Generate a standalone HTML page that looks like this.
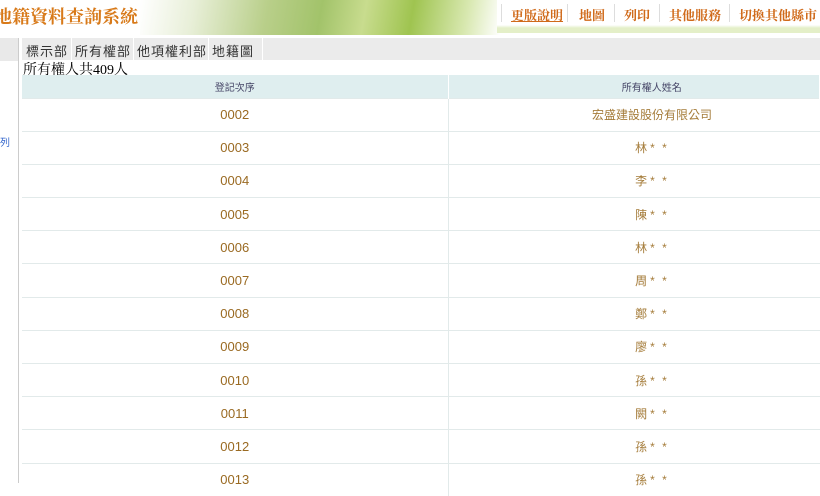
<!DOCTYPE html>
<html><head><meta charset="utf-8"><style>
*{margin:0;padding:0;box-sizing:border-box}
body{width:820px;height:483px;overflow:hidden;background:#fff;font-family:"Liberation Sans","Noto Sans CJK TC",sans-serif;position:relative}
#hdr{position:absolute;left:0;top:0;width:820px;height:35px;background:#fff}
#img{position:absolute;left:140px;top:0;width:360px;height:35px;background:linear-gradient(100deg,#fff 0%,#e8efd8 15%,#b9cf8a 35%,#a2c36a 50%,#c8dc8e 62%,#9fc450 75%,#d8e8b0 90%,#fff 100%)}
#title{position:absolute;left:-6px;top:3px;font-family:"Liberation Serif","Noto Serif CJK SC",serif;font-size:18px;font-weight:bold;color:#d87a1a}
#nav{position:absolute;left:497px;top:0;width:323px;height:33px;background:linear-gradient(#fff 0,#fff 25px,#e4efc8 28px,#e4efc8 33px)}
#nav span{position:absolute;top:5px;font-size:13px;color:#d06a1a;font-family:"Liberation Serif","Noto Serif CJK SC",serif;font-weight:bold}
.sep{position:absolute;top:4px;width:1px;height:18px;background:#ddd}
#side{position:absolute;left:0;top:38px;width:19px;height:445px;border-right:1px solid #ccc}
#sidetop{position:absolute;left:0;top:38px;width:18px;height:23px;background:#e9e9e9}
#sidelink{position:absolute;left:0;top:134px;font-size:10px;color:#36c}
#tabs{position:absolute;left:22px;top:38px;width:798px;height:22px;background:#ebebeb}
#tabs span{position:absolute;top:3px;font-size:13px;color:#333;letter-spacing:1px}
#tabs i{position:absolute;top:0;width:1px;height:22px;background:#fff}
#cnt{position:absolute;left:23px;top:59px;font-family:"Liberation Serif","Noto Serif CJK TC",serif;font-size:14px;color:#000}
table{position:absolute;left:22px;top:75px;width:798px;border-collapse:collapse}
th{height:23px;background:#dfeeef;font-weight:normal;font-size:10px;color:#446;border-right:1px solid #fff}
th.n{padding-left:36px}
td{height:33.2px;border-top:1px solid #e2eaea;text-align:center;font-size:13px;color:#9a6a22}
td.n{color:#a57c3a;border-left:1px solid #e2eaea;font-size:12px;padding-left:36px}
td.n s{text-decoration:none;font-size:12px;letter-spacing:2px;margin-left:3px}
</style></head><body>
<div id="hdr"><div id="img"></div><div id="title">地籍資料查詢系統</div>
<div id="nav">
<div class="sep" style="left:4px"></div>
<span style="left:14px;text-decoration:underline">更版說明</span>
<div class="sep" style="left:70px"></div>
<span style="left:82px">地圖</span>
<div class="sep" style="left:117px"></div>
<span style="left:127px">列印</span>
<div class="sep" style="left:162px"></div>
<span style="left:172px">其他服務</span>
<div class="sep" style="left:232px"></div>
<span style="left:242px">切換其他縣市</span>
</div></div>
<div id="side"></div><div id="sidetop"></div><div id="sidelink">列</div>
<div id="tabs"><span style="left:4px">標示部</span><i style="left:49px"></i><span style="left:53px">所有權部</span><i style="left:111px"></i><span style="left:115px">他項權利部</span><i style="left:186px"></i><span style="left:190px">地籍圖</span><i style="left:240px"></i></div>
<div id="cnt">所有權人共409人</div>
<table>
<tr><th style="width:426px">登記次序</th><th class="n">所有權人姓名</th></tr>
<tr><td>0002</td><td class="n">宏盛建設股份有限公司</td></tr>
<tr><td>0003</td><td class="n">林<s>* *</s></td></tr>
<tr><td>0004</td><td class="n">李<s>* *</s></td></tr>
<tr><td>0005</td><td class="n">陳<s>* *</s></td></tr>
<tr><td>0006</td><td class="n">林<s>* *</s></td></tr>
<tr><td>0007</td><td class="n">周<s>* *</s></td></tr>
<tr><td>0008</td><td class="n">鄭<s>* *</s></td></tr>
<tr><td>0009</td><td class="n">廖<s>* *</s></td></tr>
<tr><td>0010</td><td class="n">孫<s>* *</s></td></tr>
<tr><td>0011</td><td class="n">闕<s>* *</s></td></tr>
<tr><td>0012</td><td class="n">孫<s>* *</s></td></tr>
<tr><td>0013</td><td class="n">孫<s>* *</s></td></tr>
</table>
</body></html>
